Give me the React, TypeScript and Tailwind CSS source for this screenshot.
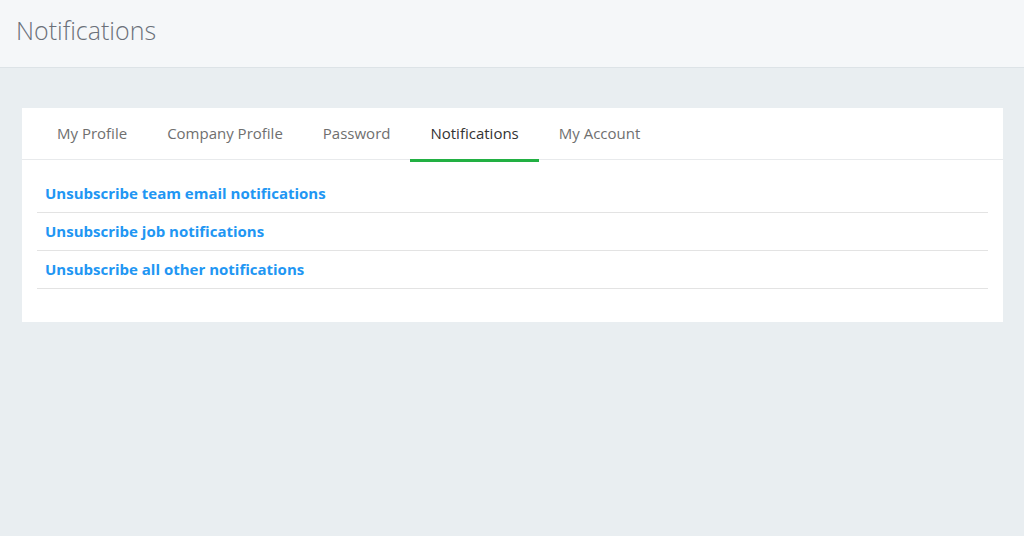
import { useState } from 'react'

const tabs = ['My Profile', 'Company Profile', 'Password', 'Notifications', 'My Account']

const links = [
  'Unsubscribe team email notifications',
  'Unsubscribe job notifications',
  'Unsubscribe all other notifications',
]

export default function App() {
  const [active, setActive] = useState('Notifications')

  return (
    <div className="min-h-[536px] bg-[#e9eef1] font-['Open_Sans',sans-serif]">
      {/* Page header */}
      <header className="h-[68px] bg-[#f5f7f9] border-b border-[#dde3e7] px-4 flex items-center">
        <h1 className="text-[25px] font-light text-[#6b7079] leading-none -mt-[7px]">Notifications</h1>
      </header>

      <div className="pl-[22px] pr-[21px] pt-[40px]">
        <div className="bg-white">
          {/* Tabs */}
          <nav className="flex pl-[15px] border-b border-[#e8eaec] h-[52px]">
            {tabs.map((t) => (
              <button
                key={t}
                onClick={() => setActive(t)}
                className={
                  t === active
                    ? 'px-5 text-[15px] text-[#333] border-b-[3px] border-[#22b043] -mb-[3px]'
                    : 'px-5 text-[15px] text-[#6f6f6f] border-b-[3px] border-transparent -mb-[3px]'
                }
              >
                {t}
              </button>
            ))}
          </nav>

          {/* Notification links */}
          <div className="px-[15px] pt-[15px] pb-[33px]">
            {links.map((l) => (
              <div key={l} className="h-[38px] border-b border-[#e3e3e3] flex items-center pl-2">
                <a href="#" className="text-[15px] font-bold text-[#2196f3]">
                  {l}
                </a>
              </div>
            ))}
          </div>
        </div>
      </div>
    </div>
  )
}
